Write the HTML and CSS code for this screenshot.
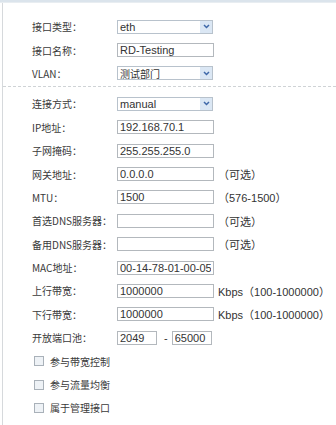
FILE: index.html
```html
<!DOCTYPE html>
<html lang="zh-CN">
  <head>
    <meta charset="UTF-8" />
    <meta name="viewport" content="width=device-width, initial-scale=1.0" />
    <title>接口设置</title>
    <link rel="stylesheet" href="styles.css">
  </head>
  <body>
    <div class="top-strip"></div>
    <div class="panel">
      <!-- 接口 -->
      <div class="section first">
        <div class="row">
          <span class="label">接口类型：</span>
          <div class="select"><span class="select-text">eth</span><span class="select-arrow"><svg width="7" height="5" viewBox="0 0 7 5"><path d="M1 1 L3.5 3.5 L6 1" fill="none" stroke="#3f68a8" stroke-width="1.5"/></svg></span></div>
        </div>
        <div class="row">
          <span class="label">接口名称：</span>
          <input class="field" type="text" value="RD-Testing">
        </div>
        <div class="row">
          <span class="label">VLAN：</span>
          <div class="select"><span class="select-text cjk">测试部门</span><span class="select-arrow"><svg width="7" height="5" viewBox="0 0 7 5"><path d="M1 1 L3.5 3.5 L6 1" fill="none" stroke="#3f68a8" stroke-width="1.5"/></svg></span></div>
        </div>
      </div>

      <div class="sep"></div>

      <!-- 连接 -->
      <div class="section second">
        <div class="row">
          <span class="label">连接方式：</span>
          <div class="select"><span class="select-text">manual</span><span class="select-arrow"><svg width="7" height="5" viewBox="0 0 7 5"><path d="M1 1 L3.5 3.5 L6 1" fill="none" stroke="#3f68a8" stroke-width="1.5"/></svg></span></div>
        </div>
        <div class="row">
          <span class="label">IP地址：</span>
          <input class="field" type="text" value="192.168.70.1">
        </div>
        <div class="row">
          <span class="label">子网掩码：</span>
          <input class="field" type="text" value="255.255.255.0">
        </div>
        <div class="row">
          <span class="label">网关地址：</span>
          <input class="field" type="text" value="0.0.0.0">
          <span class="hint">（可选）</span>
        </div>
        <div class="row">
          <span class="label">MTU：</span>
          <input class="field" type="text" value="1500">
          <span class="hint">（576-1500）</span>
        </div>
        <div class="row">
          <span class="label">首选DNS服务器：</span>
          <input class="field" type="text" value="">
          <span class="hint">（可选）</span>
        </div>
        <div class="row">
          <span class="label">备用DNS服务器：</span>
          <input class="field" type="text" value="">
          <span class="hint">（可选）</span>
        </div>
        <div class="row">
          <span class="label">MAC地址：</span>
          <input class="field" type="text" value="00-14-78-01-00-05">
        </div>
        <div class="row">
          <span class="label">上行带宽：</span>
          <input class="field" type="text" value="1000000">
          <span class="hint">Kbps（100-1000000）</span>
        </div>
        <div class="row">
          <span class="label">下行带宽：</span>
          <input class="field" type="text" value="1000000">
          <span class="hint">Kbps（100-1000000）</span>
        </div>
        <div class="row">
          <span class="label">开放端口池：</span>
          <input class="field short" type="text" value="2049">
          <span class="dash">-</span>
          <input class="field short" type="text" value="65000">
        </div>
        <div class="row check-row">
          <span class="check"></span>
          <span class="check-label">参与带宽控制</span>
        </div>
        <div class="row check-row">
          <span class="check"></span>
          <span class="check-label">参与流量均衡</span>
        </div>
        <div class="row check-row">
          <span class="check"></span>
          <span class="check-label">属于管理接口</span>
        </div>
      </div>
    </div>
  </body>
</html>
```

FILE: styles.css
```css
/*global*/
* {
  margin: 0;
  padding: 0;
  box-sizing: border-box;
}

body {
  background: #fff;
  font-family: "Liberation Sans", "Noto Sans CJK SC", sans-serif;
  font-size: 11px;
  color: #444;
  overflow: hidden;
}

/*frame*/
.top-strip {
  height: 3px;
  background: #dbe4ec;
  border-bottom: 1px solid #e8edf1;
}

.panel {
  margin-left: 2px;
  border-left: 1px solid #d6d9dc;
  height: 422px;
}

.section.first {
  padding-top: 12px;
}

.section.second {
  padding-top: 5px;
}

.sep {
  border-top: 1px dashed #cfd3d6;
  margin-top: 1px;
}

/*rows*/
.row {
  display: flex;
  align-items: center;
  height: 23.4px;
  padding-left: 29px;
}

.label {
  width: 85px;
  font-family: "Noto Sans CJK SC", sans-serif;
  font-size: 10px;
  color: #3a3a3a;
  white-space: nowrap;
}

.cjk {
  font-family: "Noto Sans CJK SC", sans-serif;
  font-size: 10px;
}

.field {
  width: 97px;
  height: 14px;
  border: 1px solid #b3b8bd;
  padding: 0 2px;
  font-family: "Liberation Sans", sans-serif;
  font-size: 11px;
  color: #333;
  outline: none;
}

.field.short {
  width: 40px;
}

.dash {
  margin: 0 4px 0 7px;
  color: #333;
}

.hint {
  margin-left: 4px;
  font-family: "Liberation Sans", "Noto Sans CJK SC", sans-serif;
  font-size: 11px;
  color: #333;
  white-space: nowrap;
}

/*select*/
.select {
  display: flex;
  align-items: center;
  width: 96px;
  height: 14px;
  border: 1px solid #b8c2cc;
  background: #fff;
}

.select-text {
  flex: 1;
  padding-left: 2px;
  color: #333;
}

.select-arrow {
  display: flex;
  align-items: center;
  justify-content: center;
  width: 12px;
  height: 12px;
  margin-right: 0;
  background: #dbe7f4;
}

/*checkbox*/
.check-row {
  padding-left: 31px;
}

.check {
  width: 10px;
  height: 10px;
  border: 1px solid #a9b1b9;
  background: #eef2f6;
}

.check-label {
  margin-left: 6px;
  font-family: "Noto Sans CJK SC", sans-serif;
  font-size: 10px;
  color: #3a3a3a;
}
```
